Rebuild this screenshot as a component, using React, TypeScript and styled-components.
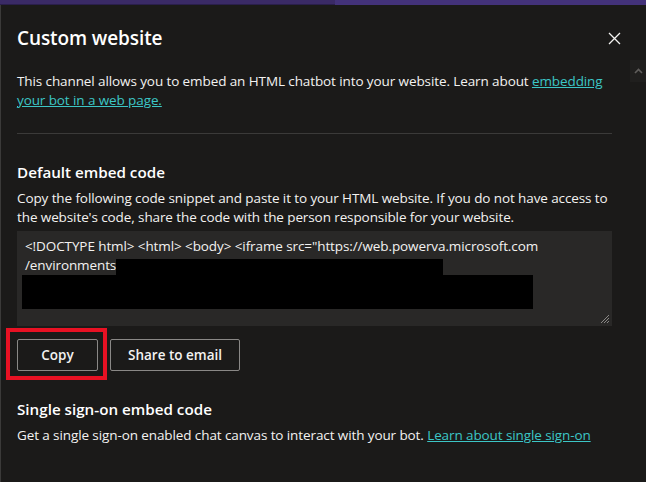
import React from "react";
import styled, { createGlobalStyle } from "styled-components";

const GlobalStyle = createGlobalStyle`
  html, body {
    margin: 0;
    padding: 0;
    background: #1b1a19;
  }
  body {
    font-family: "Open Sans", "Noto Sans", sans-serif;
    color: #f3f2f1;
  }
`;

export default function App() {
  return (
    <>
      <GlobalStyle />
      <Page>
        <TopStrip>
          <StripLeft />
          <StripRight />
        </TopStrip>
        <Body>
          <Panel>
            <Header>
              <Title>Custom website</Title>
              <CloseButton aria-label="Close">
                <svg width="13" height="13" viewBox="0 0 13 13">
                  <path d="M1 1 L12 12 M12 1 L1 12" stroke="#f3f2f1" strokeWidth="1.3" />
                </svg>
              </CloseButton>
            </Header>
            <Text>
              This channel allows you to embed an HTML chatbot into your website. Learn about{" "}
              <Link href="#">embedding your bot in a web page.</Link>
            </Text>
            <Divider />
            <SectionTitle>Default embed code</SectionTitle>
            <Text $gap={6}>
              Copy the following code snippet and paste it to your HTML website. If you do not have access to
              the website's code, share the code with the person responsible for your website.
            </Text>
            <CodeBox>
              <CodeLine>{'<!DOCTYPE html> <html> <body> <iframe src="https://web.powerva.microsoft.com'}</CodeLine>
              <CodeLine>
                /environments
                <Redact $w={327} $h={16} />
              </CodeLine>
              <RedactBlock />
              <ResizeGrip width="10" height="10" viewBox="0 0 10 10">
                <path d="M9 1 L1 9 M9 4 L4 9 M9 7 L7 9" stroke="#8a8886" strokeWidth="1" />
              </ResizeGrip>
            </CodeBox>
            <Buttons>
              <Highlighted>
                <Button $w={81}>Copy</Button>
                <RedFrame />
              </Highlighted>
              <Button $w={130}>Share to email</Button>
            </Buttons>
            <SectionTitle $gap={27}>Single sign-on embed code</SectionTitle>
            <Text $gap={6}>
              Get a single sign-on enabled chat canvas to interact with your bot.{" "}
              <Link href="#">Learn about single sign-on</Link>
            </Text>
          </Panel>
          <ScrollColumn>
            <ScrollArrow>
              <svg width="9" height="6" viewBox="0 0 9 6">
                <path d="M1 5 L4.5 1.5 L8 5" stroke="#605e5c" strokeWidth="1.6" fill="none" />
              </svg>
            </ScrollArrow>
          </ScrollColumn>
        </Body>
      </Page>
    </>
  );
}

const Page = styled.div`
  width: 646px;
  height: 482px;
  overflow: hidden;
  display: flex;
  flex-direction: column;
  background: #1b1a19;
`;

const TopStrip = styled.div`
  display: flex;
  height: 5px;
`;

const StripLeft = styled.div`
  width: 335px;
  background: #3a2a66;
  border-bottom: 1px solid #2a1f4b;
`;

const StripRight = styled.div`
  flex: 1;
  background: #43327a;
`;

const Body = styled.div`
  flex: 1;
  display: flex;
  border-left: 1px solid #3b3a39;
`;

const Panel = styled.div`
  width: 595px;
  padding: 19px 15px 0 16px;
  display: flex;
  flex-direction: column;
`;

const Header = styled.div`
  display: flex;
  align-items: center;
  justify-content: space-between;
  height: 28px;
`;

const Title = styled.h1`
  margin: 0;
  font-size: 19px;
  letter-spacing: -0.1px;
  font-weight: 600;
  color: #ffffff;
  line-height: 28px;
`;

const CloseButton = styled.button`
  background: none;
  border: none;
  padding: 0;
  margin-right: -9px;
  display: flex;
  cursor: pointer;
`;

const Text = styled.p<{ $gap?: number }>`
  margin: ${(p) => p.$gap ?? 20}px 0 0;
  font-size: 13.5px;
  letter-spacing: -0.1px;
  line-height: 19px;
  color: #f3f2f1;
`;

const Link = styled.a`
  color: #3cc6c6;
  text-decoration: underline;
`;

const Divider = styled.hr`
  margin: 23px 0 0;
  border: none;
  border-top: 1px solid #3b3a39;
  height: 0;
`;

const SectionTitle = styled.h2<{ $gap?: number }>`
  margin: ${(p) => p.$gap ?? 27}px 0 0;
  font-size: 15.2px;
  font-weight: 600;
  line-height: 22px;
  color: #ffffff;
`;

const CodeBox = styled.div`
  position: relative;
  margin-top: 4px;
  height: 95px;
  box-sizing: border-box;
  padding: 6px 10px 0 8px;
  background: #292827;
  font-size: 13.5px;
  letter-spacing: -0.1px;
  line-height: 19px;
  color: #f3f2f1;
`;

const CodeLine = styled.div`
  display: flex;
  white-space: nowrap;
`;

const Redact = styled.span<{ $w: number; $h: number }>`
  display: inline-block;
  width: ${(p) => p.$w}px;
  height: ${(p) => p.$h}px;
  margin-top: 3px;
  background: #000;
`;

const RedactBlock = styled.div`
  width: 511px;
  height: 34px;
  margin-left: -3px;
  background: #000;
`;

const ResizeGrip = styled.svg`
  position: absolute;
  right: 2px;
  bottom: 2px;
`;

const Buttons = styled.div`
  display: flex;
  gap: 12px;
  margin-top: 13px;
`;

const Highlighted = styled.div`
  position: relative;
  display: flex;
`;

const Button = styled.button<{ $w: number }>`
  width: ${(p) => p.$w}px;
  height: 32px;
  box-sizing: border-box;
  background: #1b1a19;
  border: 1px solid #8a8886;
  border-radius: 2px;
  color: #f3f2f1;
  font-family: "Open Sans", "Noto Sans", sans-serif;
  font-size: 13.5px;
  font-weight: 600;
  padding: 0;
  cursor: pointer;
`;

const RedFrame = styled.div`
  position: absolute;
  left: -11px;
  top: -11px;
  width: 101px;
  height: 52px;
  box-sizing: border-box;
  border: 4px solid #e81123;
  pointer-events: none;
`;

const ScrollColumn = styled.div`
  flex: 1;
  display: flex;
  flex-direction: column;
  align-items: flex-end;
  padding-top: 55px;
`;

const ScrollArrow = styled.div`
  width: 16px;
  height: 22px;
  background: #201f1e;
  display: flex;
  align-items: center;
  justify-content: center;
`;
